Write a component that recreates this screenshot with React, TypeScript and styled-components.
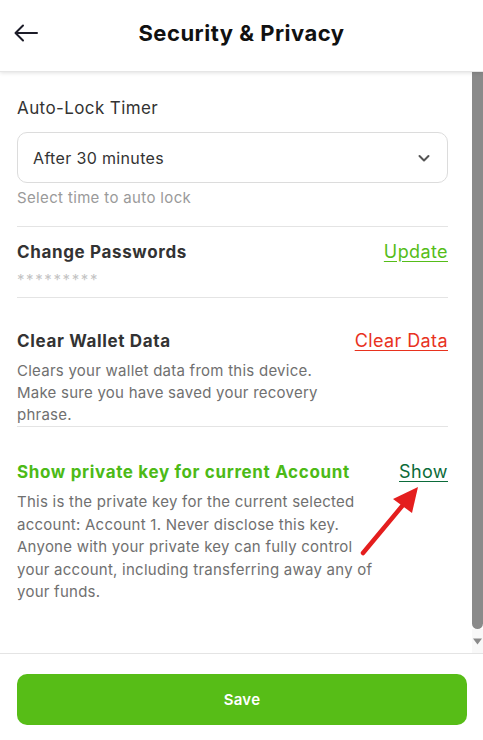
import React, { FC } from 'react';
import styled, { createGlobalStyle } from 'styled-components';

const GlobalStyle = createGlobalStyle`
    html, body {
        margin: 0;
        padding: 0;
        background: #fff;
    }
    body {
        font-family: 'Inter', 'Open Sans', sans-serif;
        color: #333;
    }
    * {
        box-sizing: border-box;
    }
`;

const Page = styled.div`
    display: flex;
    flex-direction: column;
    height: 100vh;
    width: 100%;
    background: #fff;
`;

const Header = styled.header`
    position: relative;
    z-index: 2;
    flex: 0 0 72px;
    display: flex;
    align-items: center;
    justify-content: center;
    padding-bottom: 6px;
    box-shadow: 0 1px 4px rgba(0, 0, 0, 0.12);
    border-bottom: 1px solid #e6e6e6;
`;

const BackButton = styled.button`
    position: absolute;
    left: 10px;
    top: 19px;
    width: 32px;
    height: 28px;
    border: none;
    background: none;
    padding: 0;
    display: flex;
    align-items: center;
    justify-content: center;
    cursor: pointer;
`;

const Title = styled.h1`
    margin: 0;
    font-size: 22px;
    font-weight: 700;
    color: #111;
    letter-spacing: 0.5px;
`;

const Body = styled.div`
    flex: 1;
    display: flex;
    min-height: 0;
`;

const Content = styled.main`
    flex: 1;
    overflow: hidden;
    padding: 23px 24px 26px 17px;
`;

const ScrollRail = styled.div`
    flex: 0 0 11px;
    display: flex;
    flex-direction: column;
    background: #fff;
`;

const ScrollThumb = styled.div`
    flex: 1;
    background: #8a8a8a;
    border-radius: 0 0 6px 6px;
`;

const ScrollArrow = styled.div`
    flex: 0 0 24px;
    display: flex;
    align-items: center;
    justify-content: center;
    background: #f8f8f8;
    padding-top: 1px;
`;

const Section = styled.section<{ $top: number; $bottom: number; $last?: boolean }>`
    padding-top: ${({ $top }) => $top}px;
    padding-bottom: ${({ $bottom }) => $bottom}px;
    border-bottom: ${({ $last }) => ($last ? 'none' : '1px solid #e4e4e4')};
`;

const Label = styled.div`
    font-size: 17px;
    line-height: 26px;
    letter-spacing: 0.4px;
    color: #333;
    margin-bottom: 11px;
`;

const Select = styled.div`
    height: 51px;
    border: 1px solid #dcdcdc;
    border-radius: 10px;
    display: flex;
    align-items: center;
    justify-content: space-between;
    padding: 0 16px 0 15px;
    font-size: 16px;
    letter-spacing: 0.35px;
    color: #333;
`;

const Helper = styled.div`
    margin-top: 5px;
    font-size: 15px;
    line-height: 20px;
    letter-spacing: 0.35px;
    color: #9a9a9a;
`;

const Row = styled.div`
    display: flex;
    align-items: center;
    justify-content: space-between;
`;

const RowTitle = styled.div<{ $color?: string }>`
    font-size: 17px;
    line-height: 26px;
    font-weight: 700;
    letter-spacing: 0.65px;
    color: ${({ $color }) => $color || '#333'};
`;

const ActionLink = styled.a<{ $color: string }>`
    font-size: 18px;
    line-height: 26px;
    letter-spacing: 0.4px;
    color: ${({ $color }) => $color};
    text-decoration: underline;
    text-underline-offset: 3px;
    cursor: pointer;
`;

const Masked = styled.div`
    margin-top: 5px;
    font-size: 15px;
    line-height: 20px;
    color: #c4c4c4;
    letter-spacing: 1.6px;
`;

const Description = styled.p<{ $lh: number; $max: number }>`
    margin: 6px 0 0;
    max-width: ${({ $max }) => $max}px;
    font-size: 15px;
    line-height: ${({ $lh }) => $lh}px;
    letter-spacing: 0.25px;
    color: #707070;
`;

const KeySection = styled.div`
    position: relative;
`;

const Pointer = styled.svg`
    position: absolute;
    left: 343px;
    top: 21px;
    pointer-events: none;
`;

const Footer = styled.footer`
    flex: 0 0 87px;
    border-top: 1px solid #e4e4e4;
    padding: 20px 16px 15px 17px;
`;

const SaveButton = styled.button`
    width: 100%;
    height: 51px;
    border: none;
    border-radius: 10px;
    background: #57bd17;
    color: #fff;
    font-family: inherit;
    font-size: 15px;
    font-weight: 600;
    letter-spacing: 0.3px;
    cursor: pointer;
`;

const ArrowLeft: FC = () => (
    <svg width="26" height="20" viewBox="0 0 26 20" fill="none">
        <path d="M24 10H3M10 2.5L2.5 10L10 17.5" stroke="#1c1c28" strokeWidth="2" strokeLinecap="round" strokeLinejoin="round" />
    </svg>
);

const Chevron: FC = () => (
    <svg width="14" height="10" viewBox="0 0 14 10" fill="none">
        <path d="M2.5 3l4.5 4.5L11.5 3" stroke="#555" strokeWidth="2" strokeLinecap="round" strokeLinejoin="round" />
    </svg>
);

const App: FC = () => (
    <>
        <GlobalStyle />
        <Page>
            <Header>
                <BackButton aria-label="Back">
                    <ArrowLeft />
                </BackButton>
                <Title>Security &amp; Privacy</Title>
            </Header>
            <Body>
                <Content>
                    <Section $top={0} $bottom={18}>
                        <Label>Auto-Lock Timer</Label>
                        <Select>
                            <span>After 30 minutes</span>
                            <Chevron />
                        </Select>
                        <Helper>Select time to auto lock</Helper>
                    </Section>
                    <Section $top={12} $bottom={7}>
                        <Row>
                            <RowTitle>Change Passwords</RowTitle>
                            <ActionLink $color="#55bd19">Update</ActionLink>
                        </Row>
                        <Masked>*********</Masked>
                    </Section>
                    <Section $top={30} $bottom={0}>
                        <Row>
                            <RowTitle>Clear Wallet Data</RowTitle>
                            <ActionLink $color="#e8321e">Clear Data</ActionLink>
                        </Row>
                        <Description $lh={22} $max={320}>
                            Clears your wallet data from this device. Make sure you have saved your recovery phrase.
                        </Description>
                    </Section>
                    <Section $top={32} $bottom={30} $last>
                        <KeySection>
                            <Row>
                                <RowTitle $color="#4cba17">Show private key for current Account</RowTitle>
                                <ActionLink $color="#0b6b3a">Show</ActionLink>
                            </Row>
                            <Description $lh={22.5} $max={370}>
                                This is the private key for the current selected account: Account 1. Never disclose this key. Anyone with your private key can fully control your account, including transferring away any of your funds.
                            </Description>
                            <Pointer width="62" height="78" viewBox="0 0 62 78">
                                <path d="M3 73L43 25" stroke="#e41e1e" strokeWidth="4.5" strokeLinecap="round" />
                                <path d="M58 7L33 19L52 33Z" fill="#e41e1e" strokeLinejoin="round" />
                            </Pointer>
                        </KeySection>
                    </Section>
                </Content>
                <ScrollRail aria-hidden="true">
                    <ScrollThumb />
                    <ScrollArrow>
                        <svg width="11" height="7" viewBox="0 0 11 7">
                            <path d="M1 0.5h9L5.5 6.5z" fill="#8a8a8a" />
                        </svg>
                    </ScrollArrow>
                </ScrollRail>
            </Body>
            <Footer>
                <SaveButton>Save</SaveButton>
            </Footer>
        </Page>
    </>
);

export default App;
